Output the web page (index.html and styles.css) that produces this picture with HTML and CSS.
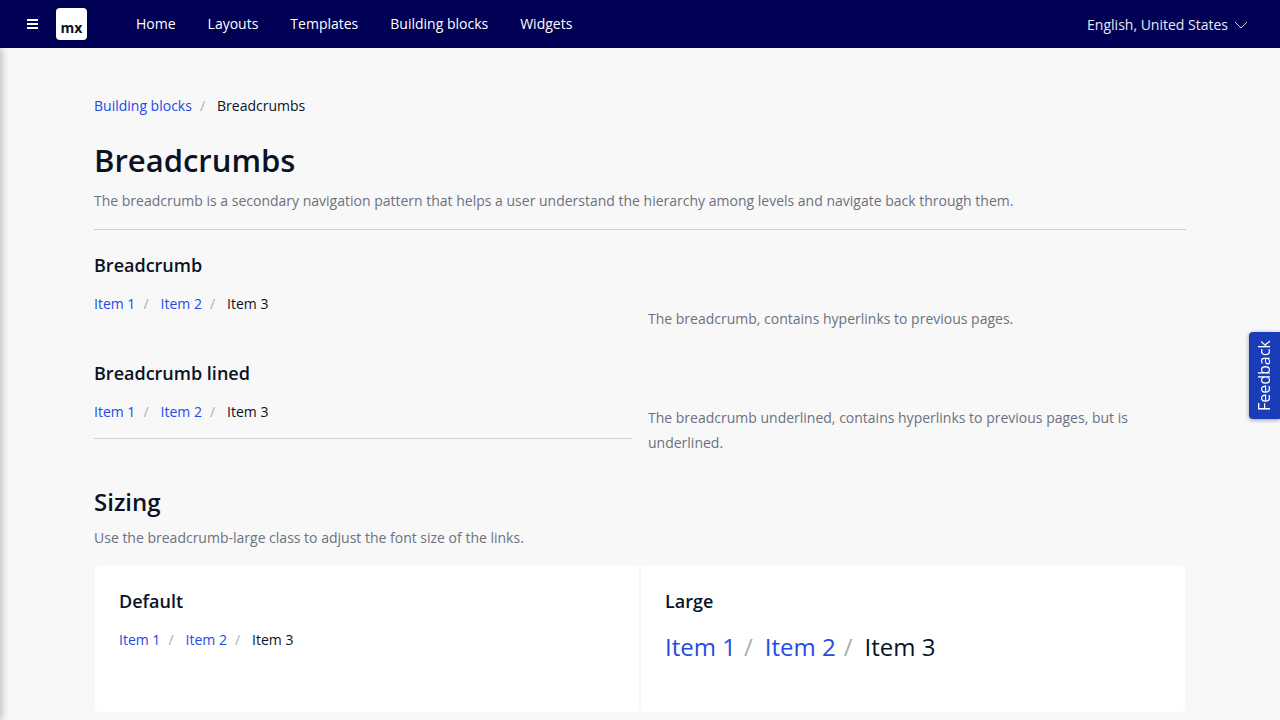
FILE: index.html
```html
<!DOCTYPE html>
<html lang="en-US">
<head>
<meta charset="utf-8">
<title>Breadcrumbs</title>
<link rel="stylesheet" href="styles.css">
</head>
<body>
<header class="topbar">
  <button class="menu-toggle" type="button" aria-label="Toggle menu">
    <svg viewBox="0 0 12 10" width="12" height="10"><path d="M1 1h11M1 5h11M1 9h11" stroke="#fff" stroke-width="2"/></svg>
  </button>
  <a class="brand" href="#" aria-label="Home page"><span>mx</span></a>
  <nav class="nav">
    <a href="#">Home</a>
    <a href="#">Layouts</a>
    <a href="#">Templates</a>
    <a href="#">Building blocks</a>
    <a href="#">Widgets</a>
  </nav>
  <button class="language" type="button">English, United States
    <svg viewBox="0 0 14 8" width="14" height="8"><path d="M1 1l6 6 6-6" fill="none" stroke="#c8c8dc"/></svg>
  </button>
</header>
<div class="sidebar-edge"></div>
<main class="page">
  <ol class="breadcrumb trail">
    <li><a href="#">Building blocks</a></li>
    <li>Breadcrumbs</li>
  </ol>
  <div class="page-head">
    <h1>Breadcrumbs</h1>
    <p>The breadcrumb is a secondary navigation pattern that helps a user understand the hierarchy among levels and navigate back through them.</p>
  </div>
  <section class="example">
    <div>
      <h4>Breadcrumb</h4>
      <ol class="breadcrumb">
        <li><a href="#">Item 1</a></li>
        <li><a href="#">Item 2</a></li>
        <li>Item 3</li>
      </ol>
    </div>
    <p>The breadcrumb, contains hyperlinks to previous pages.</p>
  </section>
  <section class="example">
    <div>
      <h4>Breadcrumb lined</h4>
      <ol class="breadcrumb lined">
        <li><a href="#">Item 1</a></li>
        <li><a href="#">Item 2</a></li>
        <li>Item 3</li>
      </ol>
    </div>
    <p>The breadcrumb underlined, contains hyperlinks to previous pages, but is underlined.</p>
  </section>
  <section class="sizing">
    <h2>Sizing</h2>
    <p>Use the breadcrumb-large class to adjust the font size of the links.</p>
    <div class="cards">
      <div class="card">
        <h4>Default</h4>
        <ol class="breadcrumb">
          <li><a href="#">Item 1</a></li>
          <li><a href="#">Item 2</a></li>
          <li>Item 3</li>
        </ol>
      </div>
      <div class="card">
        <h4>Large</h4>
        <ol class="breadcrumb large">
          <li><a href="#">Item 1</a></li>
          <li><a href="#">Item 2</a></li>
          <li>Item 3</li>
        </ol>
      </div>
    </div>
  </section>
</main>
<button class="feedback" type="button">Feedback</button>
</body>
</html>
```
FILE: styles.css
```css
* { box-sizing: border-box; }
html, body { height: 100%; }
body {
  margin: 0;
  overflow: hidden;
  display: flex;
  flex-direction: column;
  background: #f8f8f8;
  color: #0a1325;
  font: 14px/22px "Open Sans", sans-serif;
  text-rendering: optimizeSpeed;
}
h1, h2, h4, p, ol { margin: 0; padding: 0; }
h1, h2, h4 { font-weight: 600; }
a { color: #264ae5; text-decoration: none; }
button { font: inherit; border: 0; padding: 0; background: none; color: #fff; }
.topbar {
  flex: none;
  display: flex;
  align-items: center;
  height: 48px;
  padding: 0 32px 0 26px;
  background: #000055;
}
.menu-toggle { width: 30px; display: flex; }
.brand {
  width: 31px;
  height: 32px;
  border-radius: 4px;
  background: #fff;
  color: #0a1325;
  font: 700 14px/40px "Open Sans", sans-serif;
  text-align: center;
}
.nav { display: flex; gap: 32px; margin-left: 49px; }
.nav a { color: #fff; }
.language { margin-left: auto; padding-top: 2px; display: flex; align-items: center; gap: 6px; color: #e8e8f2; }
.sidebar-edge {
  position: absolute;
  top: 48px;
  bottom: 0;
  left: -4px;
  width: 4px;
  box-shadow: 0 0 8px rgba(0, 0, 0, .5);
  clip-path: inset(0 -16px 0 0);
}
.page { width: 100%; padding: 47px 94px 0; }
.breadcrumb { display: flex; list-style: none; margin-bottom: 16px; }
.breadcrumb li + li::before { content: "/"; color: #a9acb3; padding: 0 12px 0 8px; }
.trail { margin-bottom: 22px; }
.page-head { padding-bottom: 16px; border-bottom: 1px solid #ced0d3; margin-bottom: 23px; }
h1 { font-size: 31px; line-height: 42px; margin-bottom: 7px; }
h2 { font-size: 24px; line-height: 34px; margin-bottom: 6px; }
h4 { font-size: 18px; line-height: 24px; margin-bottom: 16px; }
p { color: #6c717e; line-height: 25px; }
.example { display: grid; grid-template-columns: 1fr 1fr; column-gap: 16px; align-items: end; margin-bottom: 30px; }
.lined { padding-bottom: 15px; border-bottom: 1px solid #ced0d3; }
.cards { display: grid; grid-template-columns: 1fr 1fr; margin-top: 15px; }
.card { min-height: 148px; padding: 23px 24px; border: 1px solid #f8f8f8; border-radius: 4px; background: #fff; }
.large { font-size: 24px; line-height: 36px; }
.feedback {
  position: fixed;
  right: 0;
  top: 332px;
  width: 31px;
  height: 87px;
  writing-mode: vertical-rl;
  transform: rotate(180deg);
  border-radius: 0 4px 4px 0;
  background: #1b3cb8;
  box-shadow: 0 -1px 4px rgba(0, 0, 0, .4);
  font-size: 16px;
  line-height: 31px;
}
```
